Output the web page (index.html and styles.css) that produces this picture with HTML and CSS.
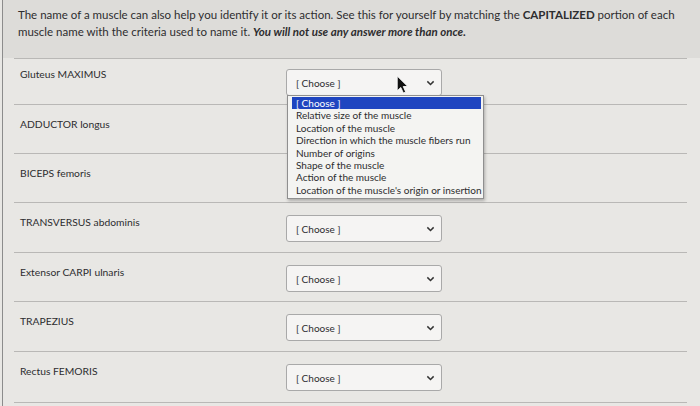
FILE: index.html
```html
<!DOCTYPE html>
<html lang="en">
<head>
  <meta charset="UTF-8" />
  <title>Matching question</title>
  <link rel="stylesheet" href="styles.css">
</head>
<body>
  <div class="question">
    <div class="prompt">
      <p>The name of a muscle can also help you identify it or its action. See this for yourself by matching the <b>CAPITALIZED</b> portion of each muscle name with the criteria used to name it. <b><i>You will not use any answer more than once.</i></b></p>
    </div>

    <div class="rows">
      <div class="row">
        <span class="label">Gluteus MAXIMUS</span>
        <div class="pick open">
          <div class="select"><span>[ Choose ]</span><svg class="chev" viewBox="0 0 10 6"><path d="M1.5 1.2 5 4.6 8.5 1.2"/></svg></div>
          <ul class="menu">
            <li class="hl">[ Choose ]</li>
            <li>Relative size of the muscle</li>
            <li>Location of the muscle</li>
            <li>Direction in which the muscle fibers run</li>
            <li>Number of origins</li>
            <li>Shape of the muscle</li>
            <li>Action of the muscle</li>
            <li>Location of the muscle's origin or insertion</li>
          </ul>
          <svg class="cursor" viewBox="0 0 12 18"><path d="M1 1 1 15 4.4 11.8 6.8 17 9 16 6.7 10.9 11 10.9Z"/></svg>
        </div>
      </div>
      <div class="row">
        <span class="label">ADDUCTOR longus</span>
      </div>
      <div class="row">
        <span class="label">BICEPS femoris</span>
      </div>
      <div class="row">
        <span class="label">TRANSVERSUS abdominis</span>
        <div class="pick"><div class="select"><span>[ Choose ]</span><svg class="chev" viewBox="0 0 10 6"><path d="M1.5 1.2 5 4.6 8.5 1.2"/></svg></div></div>
      </div>
      <div class="row">
        <span class="label">Extensor CARPI ulnaris</span>
        <div class="pick"><div class="select"><span>[ Choose ]</span><svg class="chev" viewBox="0 0 10 6"><path d="M1.5 1.2 5 4.6 8.5 1.2"/></svg></div></div>
      </div>
      <div class="row">
        <span class="label">TRAPEZIUS</span>
        <div class="pick"><div class="select"><span>[ Choose ]</span><svg class="chev" viewBox="0 0 10 6"><path d="M1.5 1.2 5 4.6 8.5 1.2"/></svg></div></div>
      </div>
      <div class="row">
        <span class="label">Rectus FEMORIS</span>
        <div class="pick"><div class="select"><span>[ Choose ]</span><svg class="chev" viewBox="0 0 10 6"><path d="M1.5 1.2 5 4.6 8.5 1.2"/></svg></div></div>
      </div>
    </div>
  </div>
</body>
</html>
```

FILE: styles.css
```css
/* Canvas-style matching question */
:root { --text: #2d2d2f; --line: #b9b8b6; --bg: #e8e7e4; --head: #dddcd9; }
* { margin: 0; padding: 0; box-sizing: border-box; }
body {
  background: var(--bg);
  font-family: Lato, 'Liberation Sans', sans-serif;
  color: var(--text);
  width: 700px; height: 406px; overflow: hidden;
}
.question {
  margin-left: 2px;
  border-left: 1px solid #8c8c8c;
  height: 406px;
}
.prompt {
  background: var(--head);
  height: 58px;
  padding: 6px 0 0 15px;
}
.prompt p { font-size: 11.5px; line-height: 17px; width: 680px; }
.rows { margin: 0 13px 0 11px; }
.row {
  display: grid; grid-template-columns: 272px 156px;
  align-items: start;
  border-top: 1px solid var(--line);
  height: 49px; padding-top: 12px;
}
.row:first-child { height: 46px; padding-top: 8px; }
.row:nth-child(4), .row:nth-child(6) { height: 50px; }
.row:last-child { height: 52px; border-bottom: 1px solid var(--line); }
.label { font-size: 10.3px; line-height: 14px; padding-left: 6px; }
.pick { position: relative; }
.row:first-child .pick { margin-top: 2px; }
.select {
  display: flex; align-items: center; justify-content: space-between;
  height: 27px; padding: 0 6px 0 9px;
  background: rgba(255,255,255,0.55);
  border: 1px solid #a9a9a9; border-radius: 3px;
  font-size: 10px;
}
.chev { width: 9px; height: 6px; fill: none; stroke: #333; stroke-width: 1.6; }
.menu {
  position: absolute; top: 26px; left: 1px; width: 197px;
  list-style: none; background: #f4f4f2;
  border: 1px solid #8f8f8f; padding: 1px 2px 2px 5px;
  box-shadow: 1px 2px 3px rgba(0,0,0,0.25);
  font-size: 10px; line-height: 12.4px; z-index: 2;
}
.menu li { padding-left: 3px; white-space: nowrap; }
.menu li.hl { background: #1f45c0; color: #fff; margin-left: -1px; padding-left: 4px; }
.cursor {
  position: absolute; left: 110px; top: 6px; width: 13px; height: 19px;
  fill: #111; stroke: #fff; stroke-width: 0.8; z-index: 3;
}
```
